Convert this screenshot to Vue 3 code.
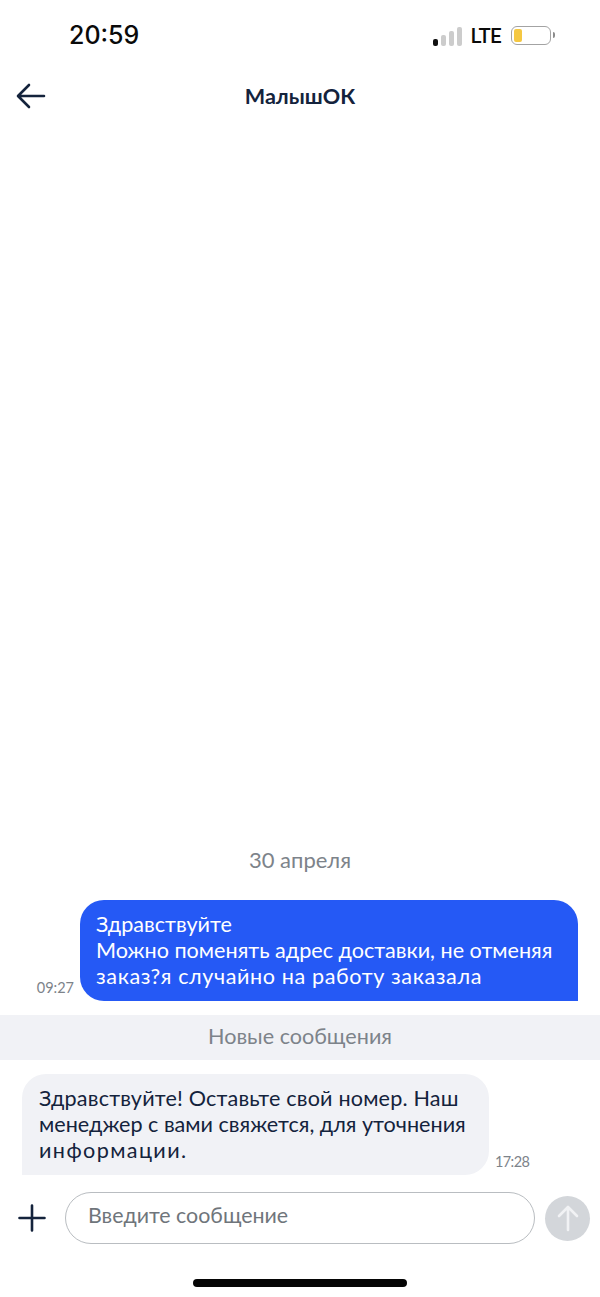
<template>
  <div class="screen">
    <div class="status">
      <span class="clock">20:59</span>
      <div class="status-right">
        <div class="signal"><i class="b1"></i><i class="b2"></i><i class="b3"></i><i class="b4"></i></div>
        <span class="lte">LTE</span>
        <div class="battery"><div class="level"></div></div>
        <div class="cap"></div>
      </div>
    </div>
    <header class="head">
      <svg class="back" width="30" height="26" viewBox="0 0 30 26" fill="none" stroke="#14233c" stroke-width="2.6" stroke-linecap="round" stroke-linejoin="round">
        <path d="M28 13H2.5M13 2 2 13l11 11" />
      </svg>
      <span class="title">МалышОК</span>
    </header>
    <main class="chat">
      <div class="date">30 апреля</div>
      <div class="row out">
        <span class="time">09:27</span>
        <div class="bubble blue">
          <span class="line">Здравствуйте</span>
          <span class="line">Можно поменять адрес доставки, не отменяя</span>
          <span class="line wide-a">заказ?я случайно на работу заказала</span>
        </div>
      </div>
      <div class="divider">Новые сообщения</div>
      <div class="row in">
        <div class="bubble grey">
          <span class="line wide-b">Здравствуйте! Оставьте свой номер. Наш</span>
          <span class="line">менеджер с вами свяжется, для уточнения</span>
          <span class="line wide-c">информации.</span>
        </div>
        <span class="time">17:28</span>
      </div>
    </main>
    <footer class="composer">
      <svg class="plus" width="28" height="28" viewBox="0 0 28 28" fill="none" stroke="#14233c" stroke-width="2.6" stroke-linecap="round">
        <path d="M14 1.5v25M1.5 14h25" />
      </svg>
      <div class="input">Введите сообщение</div>
      <div class="send">
        <svg width="24" height="28" viewBox="0 0 24 28" fill="none" stroke="#f1f2f4" stroke-width="2.6" stroke-linecap="round" stroke-linejoin="round">
          <path d="M12 26V3M3 12l9-9 9 9" />
        </svg>
      </div>
    </footer>
    <div class="home-wrap"><div class="home"></div></div>
  </div>
</template>

<script setup>
</script>

<style>
html, body { margin: 0; background: #fff; }
</style>

<style scoped>
.screen {
  width: 600px;
  height: 1297px;
  background: #fff;
  display: flex;
  flex-direction: column;
  font-family: "Lato", "Noto Sans", sans-serif;
  overflow: hidden;
}
.status {
  height: 70px;
  flex: none;
  display: flex;
  justify-content: space-between;
  align-items: center;
  padding: 0 45px 0 69px;
}
.clock { font: 500 25px/1 "Inter", sans-serif; color: #0a0a0a; }
.status-right { display: flex; align-items: center; }
.signal { display: flex; align-items: flex-end; gap: 3px; height: 20px; margin-top: 2px; }
.signal i { width: 5px; border-radius: 2px; background: #ccc; display: block; }
.signal .b1 { height: 7px; background: #111; }
.signal .b2 { height: 11px; }
.signal .b3 { height: 15px; }
.signal .b4 { height: 19px; }
.lte { font: 500 20px/1 "Roboto", sans-serif; color: #0a0a0a; margin-left: 9px; letter-spacing: -0.5px; margin-top: 2px; }
.battery {
  width: 40px;
  height: 19px;
  box-sizing: border-box;
  border: 1.5px solid #a3a3a3;
  border-radius: 6px;
  margin-left: 10px;
  padding: 2px;
}
.level { width: 8px; height: 100%; background: #f5c842; border-radius: 2px; }
.cap { width: 2px; height: 6px; background: #8c8c8c; border-radius: 0 2px 2px 0; margin-left: 2px; }
.head {
  height: 52px;
  flex: none;
  position: relative;
  display: flex;
  align-items: center;
  justify-content: center;
}
.back { position: absolute; left: 16px; top: 13px; }
.title { font-size: 21.6px; font-weight: 700; color: #14233c; margin-top: -1px; }
.chat {
  flex: 1;
  display: flex;
  flex-direction: column;
  justify-content: flex-end;
}
.date { text-align: center; font-size: 22px; line-height: 26px; color: #7d838a; margin-bottom: 27px; }
.row { display: flex; align-items: flex-end; }
.row.out { justify-content: flex-end; padding-right: 22px; }
.row.in { padding-left: 22px; }
.bubble { box-sizing: border-box; font-size: 21.6px; line-height: 26px; padding: 11px 16px 12px; }
.line { display: block; white-space: nowrap; }
.wide-a { letter-spacing: 0.6px; }
.wide-b { letter-spacing: 0.18px; }
.wide-c { letter-spacing: 1.4px; }
.blue { width: 498px; height: 101px; background: #2559f5; color: #fff; border-radius: 24px 24px 0 24px; }
.grey { width: 467px; height: 101px; background: #f1f2f6; color: #14233c; padding-left: 17px; border-radius: 24px 24px 24px 0; }
.time { font-size: 14.5px; line-height: 20px; color: #7d838a; }
.out .time { margin-right: 6px; margin-bottom: 3px; }
.in .time { margin-left: 6px; margin-bottom: 3px; letter-spacing: -0.6px; }
.divider {
  margin: 14px 0;
  height: 45px;
  background: #f1f2f6;
  color: #7d838a;
  font-size: 21.6px;
  line-height: 43px;
  text-align: center;
}
.composer {
  flex: none;
  display: flex;
  align-items: center;
  height: 52px;
  margin-top: 17px;
  padding-left: 18px;
}
.plus { flex: none; }
.input {
  box-sizing: border-box;
  width: 470px;
  height: 52px;
  margin-left: 19px;
  border: 1.5px solid #b9bdc1;
  border-radius: 26px;
  padding-left: 22px;
  font-size: 21.4px;
  line-height: 45px;
  color: #6f757b;
}
.send {
  width: 45px;
  height: 45px;
  margin-left: 10px;
  border-radius: 50%;
  background: #d3d6da;
  display: flex;
  align-items: center;
  justify-content: center;
}
.home-wrap { flex: none; height: 53px; display: flex; justify-content: center; padding-top: 35px; box-sizing: border-box; }
.home { width: 214px; height: 8px; border-radius: 4px; background: #050505; }
</style>
